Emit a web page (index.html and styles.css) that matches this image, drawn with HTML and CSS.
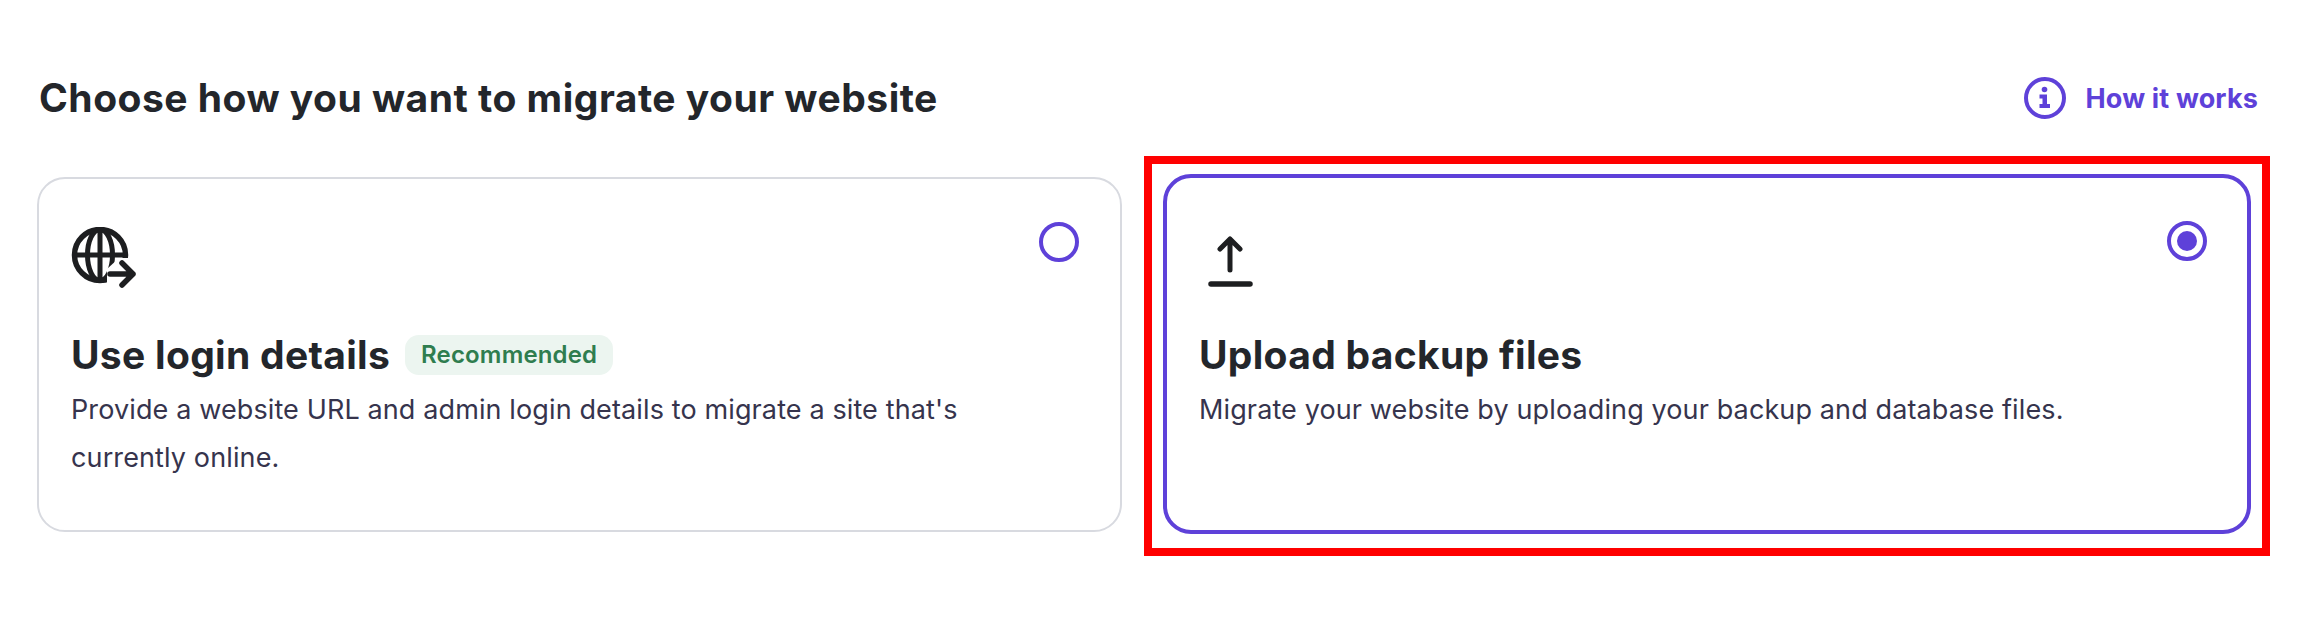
FILE: index.html
```html
<!DOCTYPE html>
<html lang="en">
<head>
  <meta charset="UTF-8" />
  <meta name="viewport" content="width=device-width, initial-scale=1.0"/>
  <title>Migrate your website</title>
  <link rel="stylesheet" href="styles.css">
</head>
<body>

  <main class="pagina">
    <header class="cabecera">
      <h1>Choose how you want to migrate your website</h1>
      <a class="ayuda" href="#">
        <svg class="icono-info" viewBox="0 0 42 42" width="42" height="42">
          <circle cx="21" cy="21" r="19" fill="none" stroke="currentColor" stroke-width="4"/>
          <circle cx="20.5" cy="12.5" r="2.8" fill="currentColor"/>
          <path d="M15.5 17.5h7.5v9.5h3v4h-10.500v-4h3v-5.500h-3z" fill="currentColor"/>
        </svg>
        How it works
      </a>
    </header>

    <section class="opciones">
      <!-- Login details -->
      <div class="opcion">
        <div class="fila-icono">
          <svg viewBox="0 0 66 62" width="66" height="62">
            <g fill="none" stroke="#1d1e20">
              <circle cx="29" cy="28" r="25.500" stroke-width="5.500"/>
              <ellipse cx="29" cy="28" rx="12.500" ry="25.500" stroke-width="5"/>
              <path d="M29 3v50M4 28h50" stroke-width="5"/>
            </g>
            <polygon points="36,62 36,42 48,31 66,31 66,62" fill="#fff"/>
            <path d="M39 47h23M51 36l11 11-11 11" fill="none" stroke="#1d1e20" stroke-width="5.500" stroke-linecap="round" stroke-linejoin="round"/>
          </svg>
          <span class="radio"></span>
        </div>
        <div class="titulo">
          <h2>Use login details</h2>
          <span class="etiqueta">Recommended</span>
        </div>
        <p>Provide a website URL and admin login details to migrate a site that's currently online.</p>
      </div>

      <!-- Backup files -->
      <div class="opcion activa">
        <div class="fila-icono">
          <svg viewBox="0 0 66 62" width="66" height="62">
            <path d="M31 44V13M21 23L31 13 41 23" fill="none" stroke="#1d1e20" stroke-width="5" stroke-linecap="round" stroke-linejoin="round"/>
            <path d="M12 58h39" fill="none" stroke="#1d1e20" stroke-width="5.500" stroke-linecap="round"/>
          </svg>
          <span class="radio marcado"></span>
        </div>
        <div class="titulo">
          <h2>Upload backup files</h2>
        </div>
        <p>Migrate your website by uploading your backup and database files.</p>
        <div class="marca"></div>
      </div>
    </section>
  </main>

</body>
</html>
```

FILE: styles.css
```css
/* --------- Base --------- */
body { font-family: Inter, "Noto Sans", sans-serif; margin: 0; background: #fff; color: #1d1e20 }
h1, h2, p { margin: 0 }

.pagina { padding: 70px 40px 90px 37px }

/* Cabecera */
.cabecera { display: flex; justify-content: space-between; align-items: center; height: 56px; padding-left: 2px; margin-bottom: 48px }
.cabecera h1 { font-size: 39px; font-weight: 700; line-height: 56px; letter-spacing: 0.5px; color: #23262b }
.ayuda { display: flex; align-items: center; gap: 20px; color: #5e41d9; font-size: 27px; font-weight: 700; letter-spacing: 0.15px; text-decoration: none }
.icono-info { display: block }

/* Tarjetas */
.opciones { display: grid; grid-template-columns: 1085px 1088px; column-gap: 41px; align-items: center }
.opcion {
  position: relative; box-sizing: border-box; height: 355px;
  background: #fff; border: 2px solid #d8dae0; border-radius: 28px;
  padding: 48px 32px 0 32px;
}
.opcion.activa { height: 360px; border: 4px solid #5e41d9; border-radius: 28px; padding: 48px 25px 0 32px }

.fila-icono { display: flex; justify-content: space-between; align-items: flex-start; height: 62px; margin-bottom: 43px }
.activa .fila-icono { margin-bottom: 44px }
.fila-icono svg { display: block }

.radio { box-sizing: border-box; width: 40px; height: 40px; margin-top: -5px; margin-right: 9px; border: 4px solid #5e41d9; border-radius: 50%; display: flex; align-items: center; justify-content: center }
.radio.marcado { margin-right: 15px }
.radio.marcado::after { content: ""; width: 20px; height: 20px; background: #5e41d9; border-radius: 50% }

.titulo { display: flex; align-items: center; gap: 15px; height: 46px; margin-bottom: 8px }
.titulo h2 { font-size: 39px; font-weight: 700; line-height: 46px; letter-spacing: 0.3px; color: #23262b }
.etiqueta { background: #ecf5f0; color: #2f7d4f; font-size: 24px; font-weight: 600; line-height: 40px; letter-spacing: 0.16px; padding: 0 16px; border-radius: 14px }

.opcion p { max-width: 960px; font-size: 27px; line-height: 48px; letter-spacing: 0.12px; color: #36344d }

/* Recuadro rojo sobre la tarjeta elegida */
.marca { position: absolute; top: -22px; left: -23px; right: -23px; bottom: -26px; border: 8px solid #f00; pointer-events: none }
```
